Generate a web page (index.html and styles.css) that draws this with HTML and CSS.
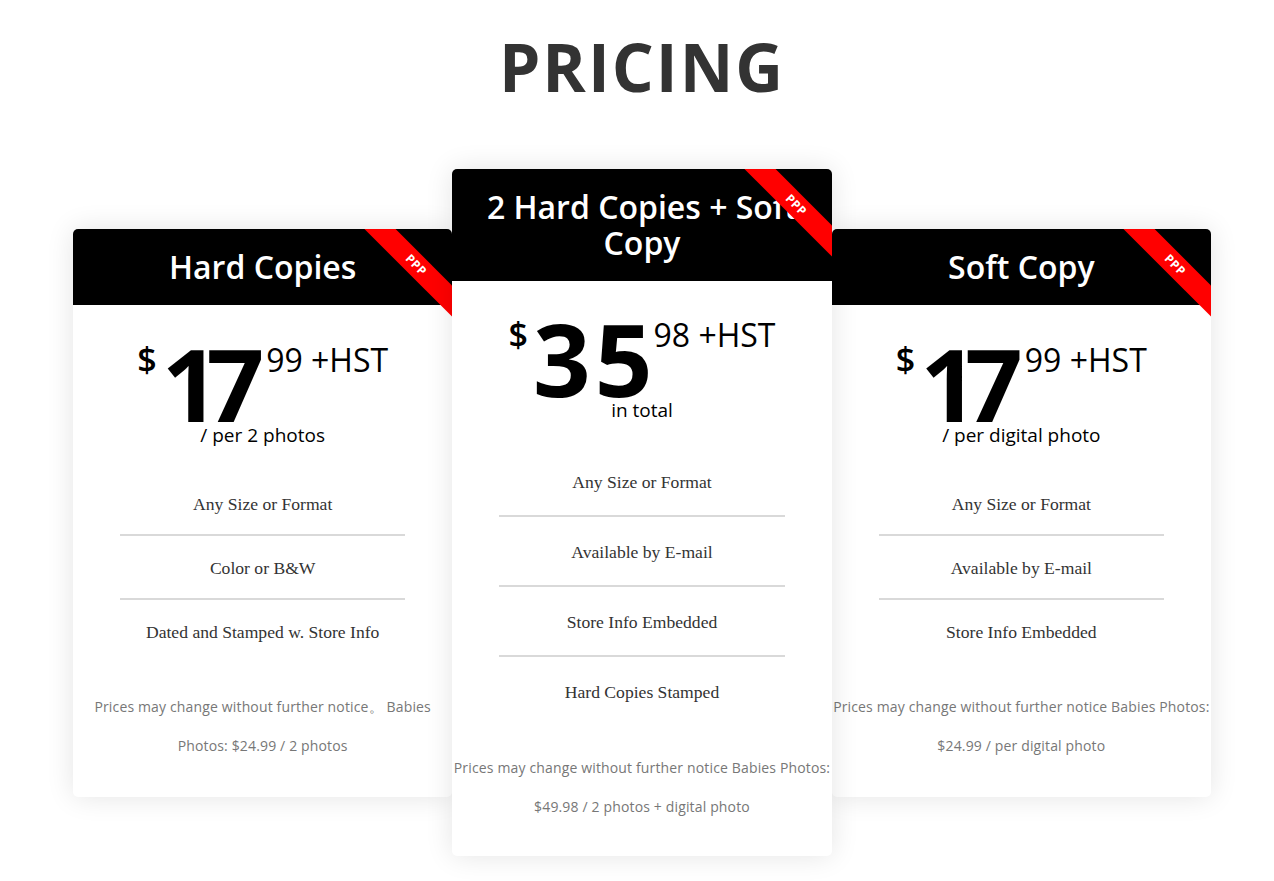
FILE: index.html
```html
<!DOCTYPE html>
<html lang="en">
<head>
<meta charset="utf-8">
<title>Pricing</title>
<link rel="stylesheet" href="styles.css">
</head>
<body>
<div class="page">
  <h1 class="title">PRICING</h1>
  <div class="cards">
    <div class="card card-side">
      <div class="ribbon">PPP</div>
      <div class="card-head"><h2 class="card-title">Hard Copies</h2></div>
      <div class="price">
        <span class="cur">$</span><span class="amount">17</span><span class="cents">99 +HST</span>
      </div>
      <div class="per">/ per 2 photos</div>
      <ul class="features">
        <li>Any Size or Format</li>
        <li>Color or B&amp;W</li>
        <li>Dated and Stamped w. Store Info</li>
      </ul>
      <p class="note">Prices may change without further notice。 Babies<br>Photos: $24.99 / 2 photos</p>
    </div>
    <div class="card card-main">
      <div class="ribbon">PPP</div>
      <div class="card-head"><h2 class="card-title">2 Hard Copies + Soft Copy</h2></div>
      <div class="price">
        <span class="cur">$</span><span class="amount amount-wide">35</span><span class="cents">98 +HST</span>
      </div>
      <div class="per">in total</div>
      <ul class="features">
        <li>Any Size or Format</li>
        <li>Available by E-mail</li>
        <li>Store Info Embedded</li>
        <li>Hard Copies Stamped</li>
      </ul>
      <p class="note">Prices may change without further notice Babies Photos:<br>$49.98 / 2 photos + digital photo</p>
    </div>
    <div class="card card-side">
      <div class="ribbon">PPP</div>
      <div class="card-head"><h2 class="card-title">Soft Copy</h2></div>
      <div class="price">
        <span class="cur">$</span><span class="amount">17</span><span class="cents">99 +HST</span>
      </div>
      <div class="per">/ per digital photo</div>
      <ul class="features">
        <li>Any Size or Format</li>
        <li>Available by E-mail</li>
        <li>Store Info Embedded</li>
      </ul>
      <p class="note">Prices may change without further notice Babies Photos:<br>$24.99 / per digital photo</p>
    </div>
  </div>
</div>
</body>
</html>
```
FILE: styles.css
```css
* { box-sizing: border-box; }
html, body { margin: 0; padding: 0; background: #fff; }
body { font-family: "Open Sans", "Liberation Sans", sans-serif; color: #000; }

.page {
  width: 1148px;
  margin: 0 auto;
  padding: 33px 0 40px 10px;
}

.title {
  margin: 0;
  font-size: 66px;
  line-height: 66px;
  font-weight: 700;
  letter-spacing: 2px;
  color: #333;
  text-align: center;
}

.cards {
  margin-top: 70px;
  display: grid;
  grid-template-columns: repeat(3, 1fr);
  align-items: start;
}

.card {
  position: relative;
  overflow: hidden;
  background: #fff;
  border-radius: 5px;
  box-shadow: 0 0 28px rgba(0, 0, 0, 0.11);
  text-align: center;
}
.card-side { margin-top: 60px; z-index: 1; }
.card-main { z-index: 2; }

.card-head {
  background: #000;
  padding: 20px 20px;
}
.card-title {
  margin: 0;
  color: #fff;
  font-size: 32px;
  line-height: 36px;
  font-weight: 600;
}

.ribbon {
  position: absolute;
  top: 25px;
  right: -64px;
  width: 200px;
  height: 22px;
  background: #ff0000;
  color: #fff;
  font-size: 12px;
  font-weight: 700;
  line-height: 22px;
  letter-spacing: 0.5px;
  text-align: center;
  transform: rotate(45deg);
  z-index: 3;
}

.price {
  display: flex;
  justify-content: center;
  align-items: flex-start;
  padding-top: 42px;
}
.card-main .price { padding-top: 41px; }
.cur {
  font-size: 34px;
  line-height: 34px;
  font-weight: 600;
  margin-top: -5px;
  margin-right: 5px;
}
.amount {
  font-size: 101px;
  line-height: 72px;
  font-weight: 700;
  letter-spacing: -13px;
  margin-right: 15px;
}
.amount-wide {
  letter-spacing: 4px;
  margin-right: -3px;
}
.cents {
  font-size: 32px;
  line-height: 32px;
  font-weight: 500;
  margin-top: -3px;
}
.per {
  margin-top: 4px;
  font-size: 19px;
  line-height: 24px;
}

.features {
  list-style: none;
  margin: 25px 47px 0;
  padding: 0;
  font-family: "Liberation Serif", "DejaVu Serif", serif;
  font-size: 17.6px;
  line-height: 24px;
  color: #333;
}
.features li {
  padding: 20px 0 18px;
  border-bottom: 2px solid #d9d9d9;
}
.card-main .features li { padding: 23px 0 21px; }
.features li:last-child { border-bottom: none; }

.note {
  margin: 25px 0 0;
  padding-bottom: 32px;
  font-size: 14px;
  letter-spacing: 0.15px;
  line-height: 39px;
  color: #777;
}
.card-main .note { margin-top: 23px; padding-bottom: 30px; }
```
